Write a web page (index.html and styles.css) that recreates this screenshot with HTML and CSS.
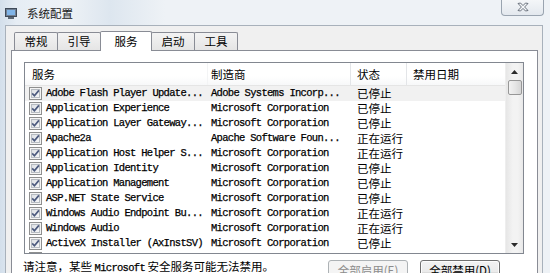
FILE: index.html
```html
<!DOCTYPE html>
<html lang="zh-CN">
<head>
<meta charset="utf-8">
<title>系统配置</title>
<link rel="stylesheet" href="styles.css">
</head>
<body>
<svg width="0" height="0" class="defs">
  <defs>
    <linearGradient id="cbfill" x1="0" y1="0" x2="1" y2="1">
      <stop offset="0" stop-color="#dcdfe3"/>
      <stop offset="1" stop-color="#f7f8f9"/>
    </linearGradient>
    <symbol id="cb" viewBox="0 0 13 13">
      <rect x="0.5" y="0.5" width="12" height="12" fill="#f4f4f4" stroke="#8e8f8f"/>
      <rect x="2.5" y="2.5" width="8" height="8" fill="url(#cbfill)" stroke="#b7bcc2"/>
      <path d="M3.2 6.4 L5.4 8.8 L9.9 3.4" fill="none" stroke="#4c5a7e" stroke-width="1.7"/>
    </symbol>
  </defs>
</svg>
<div class="window">
  <div class="titlebar">
    <svg class="app-icon" viewBox="0 0 12 11">
      <rect x="0.5" y="0.5" width="11" height="8" fill="#6f7f93" stroke="#3f4a58"/>
      <rect x="2" y="2" width="8" height="5" fill="#7fb4e8"/>
      <rect x="3" y="9" width="6" height="2" fill="#5a6674"/>
    </svg>
    <span class="title">系统配置</span>
    <div class="close">
      <svg viewBox="0 0 12 10" class="close-x">
        <path d="M1 1.5 L3.5 1 L6 3.6 L8.5 1 L11 1.5 L7.6 5 L11 8.5 L8.5 9 L6 6.4 L3.5 9 L1 8.5 L4.4 5 Z" fill="#f6f8fa" stroke="#5c6470" stroke-width="0.9" stroke-linejoin="round"/>
      </svg>
    </div>
  </div>
  <div class="client">
    <div class="tabs">
      <div class="tab">常规</div>
      <div class="tab">引导</div>
      <div class="tab active">服务</div>
      <div class="tab">启动</div>
      <div class="tab">工具</div>
    </div>
    <div class="panel">
      <div class="listview">
        <div class="lv-main">
          <div class="lv-header">
            <div class="hcell c1">服务</div>
            <div class="hcell c2">制造商</div>
            <div class="hcell c3">状态</div>
            <div class="hcell c4">禁用日期</div>
          </div>
          <div class="lv-rows">
            <div class="row hot"><div class="cell c1"><svg class="cb"><use href="#cb"/></svg><span class="mono">Adobe Flash Player Update...</span></div><div class="cell c2 mono">Adobe Systems Incorp...</div><div class="cell c3">已停止</div><div class="cell c4"></div></div>
            <div class="row"><div class="cell c1"><svg class="cb"><use href="#cb"/></svg><span class="mono">Application Experience</span></div><div class="cell c2 mono">Microsoft Corporation</div><div class="cell c3">已停止</div><div class="cell c4"></div></div>
            <div class="row"><div class="cell c1"><svg class="cb"><use href="#cb"/></svg><span class="mono">Application Layer Gateway...</span></div><div class="cell c2 mono">Microsoft Corporation</div><div class="cell c3">已停止</div><div class="cell c4"></div></div>
            <div class="row"><div class="cell c1"><svg class="cb"><use href="#cb"/></svg><span class="mono">Apache2a</span></div><div class="cell c2 mono">Apache Software Foun...</div><div class="cell c3">正在运行</div><div class="cell c4"></div></div>
            <div class="row"><div class="cell c1"><svg class="cb"><use href="#cb"/></svg><span class="mono">Application Host Helper S...</span></div><div class="cell c2 mono">Microsoft Corporation</div><div class="cell c3">正在运行</div><div class="cell c4"></div></div>
            <div class="row"><div class="cell c1"><svg class="cb"><use href="#cb"/></svg><span class="mono">Application Identity</span></div><div class="cell c2 mono">Microsoft Corporation</div><div class="cell c3">已停止</div><div class="cell c4"></div></div>
            <div class="row"><div class="cell c1"><svg class="cb"><use href="#cb"/></svg><span class="mono">Application Management</span></div><div class="cell c2 mono">Microsoft Corporation</div><div class="cell c3">已停止</div><div class="cell c4"></div></div>
            <div class="row"><div class="cell c1"><svg class="cb"><use href="#cb"/></svg><span class="mono">ASP.NET State Service</span></div><div class="cell c2 mono">Microsoft Corporation</div><div class="cell c3">已停止</div><div class="cell c4"></div></div>
            <div class="row"><div class="cell c1"><svg class="cb"><use href="#cb"/></svg><span class="mono">Windows Audio Endpoint Bu...</span></div><div class="cell c2 mono">Microsoft Corporation</div><div class="cell c3">正在运行</div><div class="cell c4"></div></div>
            <div class="row"><div class="cell c1"><svg class="cb"><use href="#cb"/></svg><span class="mono">Windows Audio</span></div><div class="cell c2 mono">Microsoft Corporation</div><div class="cell c3">正在运行</div><div class="cell c4"></div></div>
            <div class="row"><div class="cell c1"><svg class="cb"><use href="#cb"/></svg><span class="mono">ActiveX Installer (AxInstSV)</span></div><div class="cell c2 mono">Microsoft Corporation</div><div class="cell c3">已停止</div><div class="cell c4"></div></div>
            <div class="row"><div class="cell c1"><svg class="cb"><use href="#cb"/></svg></div></div>
          </div>
        </div>
        <div class="scrollbar">
          <div class="sb-btn"><svg viewBox="0 0 7 4" class="arrow"><path d="M0 4 L3.5 0 L7 4 Z" fill="#2b2b2b"/></svg></div>
          <div class="sb-thumb"></div>
          <div class="sb-track"></div>
          <div class="sb-btn"><svg viewBox="0 0 7 4" class="arrow"><path d="M0 0 L3.5 4 L7 0 Z" fill="#2b2b2b"/></svg></div>
        </div>
      </div>
      <div class="footer">
        <span class="note">请注意，某些 <span class="mono">Microsoft</span> 安全服务可能无法禁用。</span>
        <div class="buttons">
          <div class="btn disabled">全部启用(<u>E</u>)</div>
          <div class="btn">全部禁用(<u>D</u>)</div>
        </div>
      </div>
    </div>
  </div>
</div>
</body>
</html>
```

FILE: styles.css
```css
* { box-sizing: border-box; }
html, body { margin: 0; padding: 0; }
body {
  width: 550px;
  height: 273px;
  overflow: hidden;
  background: #dbe5ef;
  font-family: "Noto Sans CJK SC", "Liberation Sans", sans-serif;
  color: #000;
}
.defs { position: absolute; }
.window {
  width: 550px;
  height: 273px;
  overflow: hidden;
  background:
    linear-gradient(90deg, #d3dfeb 0, #e6edf4 3%, #eef2f6 12%, #dde6ef 20%, #eef2f6 30%, #eef2f6 100%);
}
.titlebar {
  height: 25px;
  display: flex;
  align-items: center;
  padding-left: 5px;
}
.app-icon { width: 12px; height: 11px; flex: none; margin-top: 1px; }
.title {
  margin-left: 10px;
  font-size: 11.5px;
  line-height: 14px;
  color: #1a1a1a;
}
.close {
  align-self: flex-start;
  margin-left: auto;
  margin-right: 6px;
  margin-top: -1px;
  width: 43px;
  height: 17px;
  border: 1px solid #9aa4b0;
  border-top: none;
  border-radius: 0 0 4px 4px;
  background: linear-gradient(#f5f7f9, #e3e8ee);
  display: flex;
  align-items: center;
  justify-content: center;
}
.close-x { width: 12px; height: 10px; }
.client {
  margin-left: 5px;
  width: 538px;
  height: 248px;
  border: 1px solid #a8b1bb;
  border-bottom: none;
  background: #f0f0f0;
}
.tabs {
  height: 24px;
  display: flex;
  align-items: flex-end;
  padding-left: 8px;
  position: relative;
  z-index: 1;
}
.tab {
  width: 44px;
  height: 18px;
  margin-left: -1px;
  border: 1px solid #898c95;
  border-bottom: none;
  border-radius: 2px 2px 0 0;
  background: linear-gradient(#f3f3f3, #e5e5e5);
  font-size: 11.5px;
  line-height: 17px;
  text-align: center;
}
.tab:first-child { margin-left: 0; }
.tab.active {
  width: 52px;
  height: 20px;
  margin-bottom: -1px;
  background: #fff;
  line-height: 18px;
}
.panel {
  margin-left: 5px;
  width: 527px;
  height: 224px;
  border: 1px solid #898c95;
  border-bottom: none;
  background: #fff;
  padding: 11px 0 0 12px;
}
.listview {
  width: 500px;
  height: 192px;
  border: 1px solid #828790;
  display: flex;
  overflow: hidden;
}
.lv-main {
  width: 480px;
  overflow: hidden;
}
.lv-header {
  height: 23px;
  display: grid;
  grid-template-columns: 183px 143px 56px 75px;
  border-bottom: 1px solid #e5e5e5;
  background: linear-gradient(#fff 0, #fff 60%, #f7f8f9 100%);
}
.hcell {
  font-size: 11.5px;
  line-height: 22px;
  border-right: 1px solid #e3e5e8;
  padding-left: 6px;
  white-space: nowrap;
}
.hcell.c1 { padding-left: 7px; border-right-color: #f3f4f5; }
.hcell.c2 { padding-left: 3px; }
.hcell.c4 { border-right: none; }
.row {
  height: 15px;
  display: grid;
  grid-template-columns: 183px 143px 56px 75px;
  align-items: center;
}
.row.hot { background: #f1f1f1; }
.cell {
  font-size: 11.5px;
  line-height: 15px;
  white-space: nowrap;
  overflow: hidden;
  display: flex;
  align-items: center;
}
.cell.c1 { padding-left: 4px; }
.cell.c2 { padding-left: 3px; }
.cell.c3 { padding-left: 6px; }
.cb { width: 13px; height: 13px; flex: none; margin-right: 4px; }
.mono {
  font-family: "Liberation Mono", "Noto Sans CJK SC", monospace;
  font-size: 10.5px;
  letter-spacing: -0.7px;
  color: #000;
  -webkit-text-stroke: 0.25px #000;
}
.scrollbar {
  width: 18px;
  border-left: 1px solid #eeeeee;
  background: linear-gradient(90deg, #e6e6e6, #f3f3f3 40%, #f3f3f3 70%, #e8e8e8);
  display: flex;
  flex-direction: column;
  align-items: center;
}
.sb-btn {
  width: 17px;
  height: 17px;
  display: flex;
  align-items: center;
  justify-content: center;
  flex: none;
}
.arrow { width: 7px; height: 4px; }
.sb-thumb {
  width: 14px;
  height: 15px;
  border: 1px solid #979797;
  border-radius: 2px;
  background: linear-gradient(90deg, #f2f2f2, #e6e6e6 50%, #d6d6d6);
  flex: none;
}
.sb-track { flex: 1; }
.footer {
  display: flex;
  align-items: flex-start;
  margin-top: 6px;
}
.note {
  font-size: 11.5px;
  line-height: 14px;
  margin-top: -1px;
  margin-left: -1px;
  white-space: nowrap;
}
.buttons {
  margin-left: auto;
  margin-right: 37px;
  display: flex;
  gap: 12px;
}
.btn {
  width: 80px;
  height: 23px;
  border: 1px solid #707070;
  border-radius: 3px;
  background: linear-gradient(#f2f2f2 0, #ebebeb 50%, #dddddd 51%, #cfcfcf 100%);
  box-shadow: inset 0 0 0 1px #fcfcfc;
  font-size: 11.5px;
  line-height: 19px;
  text-align: center;
  white-space: nowrap;
}
.btn.disabled {
  border-color: #adb2b5;
  background: #f4f4f4;
  box-shadow: none;
  color: #8c8c8c;
}
.btn u { text-decoration: underline; }
```
